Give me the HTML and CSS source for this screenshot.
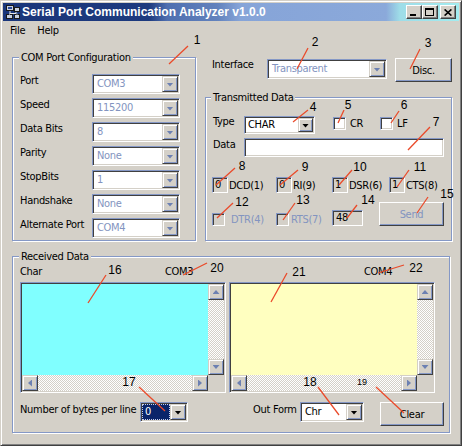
FILE: index.html
```html
<!DOCTYPE html>
<html>
<head>
<meta charset="utf-8">
<title>Serial Port Communication Analyzer v1.0.0</title>
<link rel="stylesheet" href="styles.css">
</head>
<body>
<div class="window">
  <div class="titlebar">
    <svg class="appicon" viewBox="0 0 16 16">
      <rect x="1.5" y="1.5" width="7" height="5" fill="#c8d0e0" stroke="#1a1a1a"/>
      <rect x="3" y="3" width="4" height="2" fill="#2a4a9a"/>
      <path d="M5 7v2.5h6V8" stroke="#e8e8e8" fill="none"/>
      <rect x="9.5" y="3.5" width="5" height="4" fill="#c8d0e0" stroke="#1a1a1a"/>
      <rect x="1.5" y="10.5" width="6" height="4" fill="#c8d0e0" stroke="#1a1a1a"/>
      <rect x="9.5" y="10.5" width="5" height="4" fill="#c8d0e0" stroke="#1a1a1a"/>
      <path d="M4.5 9.5v1M12 9.5v1" stroke="#e8e8e8"/>
    </svg>
    <span class="title">Serial Port Communication Analyzer v1.0.0</span>
    <div class="tbtns">
      <span class="tbtn"><i class="g-min"></i></span>
      <span class="tbtn"><i class="g-max"></i></span>
      <span class="tbtn tclose"><svg class="g-x" viewBox="0 0 8 7"><path d="M0.6 0.4l6.8 6.2M7.4 0.4L0.6 6.6" stroke="#000" stroke-width="1.6"/></svg></span>
    </div>
  </div>
  <div class="menubar"><span>File</span><span>Help</span></div>

  <div class="client">
    <div class="top">
      <div class="group cfg">
        <div class="gtitle">COM Port Configuration</div>
        <div class="cfg-rows">
          <div class="row"><span class="lbl">Port</span><div class="combo dis w88"><span class="ctext">COM3</span><span class="cbtn"><i class="ar-down"></i></span></div></div>
          <div class="row"><span class="lbl">Speed</span><div class="combo dis w88"><span class="ctext">115200</span><span class="cbtn"><i class="ar-down"></i></span></div></div>
          <div class="row"><span class="lbl">Data Bits</span><div class="combo dis w88"><span class="ctext">8</span><span class="cbtn"><i class="ar-down"></i></span></div></div>
          <div class="row"><span class="lbl">Parity</span><div class="combo dis w88"><span class="ctext">None</span><span class="cbtn"><i class="ar-down"></i></span></div></div>
          <div class="row"><span class="lbl">StopBits</span><div class="combo dis w88"><span class="ctext">1</span><span class="cbtn"><i class="ar-down"></i></span></div></div>
          <div class="row"><span class="lbl">Handshake</span><div class="combo dis w88"><span class="ctext">None</span><span class="cbtn"><i class="ar-down"></i></span></div></div>
          <div class="row"><span class="lbl">Alternate Port</span><div class="combo dis w88"><span class="ctext">COM4</span><span class="cbtn"><i class="ar-down"></i></span></div></div>
        </div>
      </div>

      <div class="rightcol">
        <div class="iface">
          <span class="lbl-if">Interface</span>
          <div class="combo dis w120"><span class="ctext">Transparent</span><span class="cbtn"><i class="ar-down"></i></span></div>
          <span class="btn disc">Disc.</span>
        </div>
        <div class="group tx">
          <div class="gtitle tx-title">Transmitted Data</div>
          <div class="tx-row type-row">
            <span class="lbl-tx">Type</span>
            <div class="combo sm w71"><span class="ctext">CHAR</span><span class="cbtn"><i class="ar-down"></i></span></div>
            <span class="chkwrap cr"><span class="chk"></span><span class="chk-l">CR</span></span>
            <span class="chkwrap"><span class="chk"></span><span class="chk-l">LF</span></span>
          </div>
          <div class="tx-row data-row">
            <span class="lbl-tx lbl-data">Data</span>
            <span class="textbox"></span>
          </div>
          <div class="tx-row status-row">
            <span class="stat s64"><span class="sbox">0</span>DCD(1)</span>
            <span class="stat s56"><span class="sbox">0</span>RI(9)</span>
            <span class="stat s57"><span class="sbox">1</span>DSR(6)</span>
            <span class="stat"><span class="sbox">1</span>CTS(8)</span>
          </div>
          <div class="tx-row ctl-row">
            <span class="chkwrap dtr"><span class="chk off"></span><span class="chk-l dis-t l6">DTR(4)</span></span>
            <span class="chkwrap rts"><span class="chk off"></span><span class="chk-l dis-t l2">RTS(7)</span></span>
            <span class="box48">48</span>
            <span class="btn send">Send</span>
          </div>
        </div>
      </div>
    </div>

    <div class="group rx">
      <div class="gtitle">Received Data</div>
      <div class="panes">
        <div class="pane">
          <div class="plabels"><span class="plead">Char</span><span>COM3</span></div>
          <div class="memo">
            <div class="mcontent cyan"></div>
            <div class="vs"><span class="sbtn"><i class="ar-up"></i></span><span class="track"></span><span class="sbtn"><i class="ar-down"></i></span></div>
            <div class="hs"><span class="sbtn"><i class="ar-left"></i></span><span class="track"></span><span class="sbtn"><i class="ar-right"></i></span></div>
            <div class="corner"></div>
          </div>
        </div>
        <div class="pane">
          <div class="plabels p2"><span>COM4</span></div>
          <div class="memo">
            <div class="mcontent yellow"></div>
            <div class="vs"><span class="sbtn"><i class="ar-up"></i></span><span class="track"></span><span class="sbtn"><i class="ar-down"></i></span></div>
            <div class="hs"><span class="sbtn"><i class="ar-left"></i></span><span class="track"></span><span class="sbtn"><i class="ar-right"></i></span></div>
            <div class="corner"></div>
          </div>
        </div>
      </div>
      <div class="rx-bottom">
        <span class="nb-lbl">Number of bytes per line</span>
        <div class="combo w48"><span class="ctext sel">0</span><span class="cbtn"><i class="ar-down blk"></i></span></div>
        <span class="of-lbl">Out Form</span>
        <div class="combo w64"><span class="ctext">Chr</span><span class="cbtn"><i class="ar-down blk"></i></span></div>
        <span class="btn clear">Clear</span>
      </div>
    </div>
  </div>

  <svg class="annot" viewBox="0 0 462 446">
    <g class="lines">
      <line x1="188" y1="46" x2="169" y2="64"/>
      <line x1="308" y1="48" x2="297" y2="69"/>
      <line x1="420" y1="49" x2="410" y2="69"/>
      <line x1="308" y1="110" x2="293" y2="122"/>
      <line x1="344" y1="110" x2="338" y2="123"/>
      <line x1="399" y1="111" x2="391" y2="123"/>
      <line x1="430" y1="127" x2="408" y2="150"/>
      <line x1="235" y1="168" x2="216" y2="185"/>
      <line x1="298" y1="170" x2="280" y2="185"/>
      <line x1="352" y1="170" x2="339" y2="185"/>
      <line x1="409" y1="170" x2="397" y2="187"/>
      <line x1="233" y1="203" x2="217" y2="218"/>
      <line x1="295" y1="203" x2="283" y2="220"/>
      <line x1="357" y1="205" x2="347" y2="218"/>
      <line x1="428" y1="197" x2="417" y2="213"/>
      <line x1="106" y1="275" x2="88" y2="303"/>
      <line x1="207" y1="263" x2="183" y2="275"/>
      <line x1="287" y1="273" x2="271" y2="302"/>
      <line x1="404" y1="265" x2="378" y2="273"/>
      <line x1="139" y1="387" x2="165" y2="411"/>
      <line x1="318" y1="387" x2="339" y2="415"/>
      <line x1="376" y1="387" x2="404" y2="413"/>
    </g>
    <g class="nums">
      <text x="197" y="40">1</text>
      <text x="315" y="42">2</text>
      <text x="428" y="43">3</text>
      <text x="313" y="107">4</text>
      <text x="348" y="105">5</text>
      <text x="404" y="105">6</text>
      <text x="436" y="122">7</text>
      <text x="242" y="166">8</text>
      <text x="305" y="167">9</text>
      <text x="360" y="167">10</text>
      <text x="420" y="167">11</text>
      <text x="242" y="202">12</text>
      <text x="303" y="200">13</text>
      <text x="368" y="200">14</text>
      <text x="447" y="194">15</text>
      <text x="115" y="270">16</text>
      <text x="217" y="268">20</text>
      <text x="299" y="272">21</text>
      <text x="416" y="268">22</text>
      <text x="129" y="382">17</text>
      <text x="310" y="382">18</text>
      <text class="small" x="362" y="382">19</text>
    </g>
  </svg>
</div>
</body>
</html>
```

FILE: styles.css
```css
* { box-sizing: border-box; }

body {
  margin: 0;
  background: #d4d0c8;
}

.window {
  position: relative;
  width: 462px;
  height: 446px;
  background: #d4d0c8;
  border: 1px solid;
  border-color: #d4d0c8 #404040 #404040 #d4d0c8;
  box-shadow: inset 1px 1px #fff, inset -1px -1px #808080;
  padding: 2px;
  font-family: "DejaVu Sans Condensed", "Liberation Sans", Arial, sans-serif;
  font-size: 11px;
  letter-spacing: -0.3px;
  color: #000;
  overflow: hidden;
}

/* ---------- title bar ---------- */
.titlebar {
  height: 18px;
  display: flex;
  align-items: center;
  color: #fff;
  background: linear-gradient(to right,
    #1a367a 0%, #1d3a7e 32%, #4f6fb0 36%, #6282bd 47%,
    #86a4d8 52%, #8ba9da 84%, #9edde8 87%, #a2ecf0 100%);
}
.appicon { width: 16px; height: 16px; margin-left: 2px; flex: none; }
.title {
  margin-left: 1px;
  font-family: "Liberation Sans", Arial, sans-serif;
  font-weight: bold;
  font-size: 12px;
  letter-spacing: 0;
  white-space: nowrap;
}
.tbtns { margin-left: auto; margin-right: 3px; display: flex; }
.tbtn {
  position: relative;
  width: 16px;
  height: 14px;
  background: #d4d0c8;
  border: 1px solid;
  border-color: #fff #404040 #404040 #fff;
  box-shadow: inset -1px -1px #808080;
  display: flex;
  align-items: center;
  justify-content: center;
}
.tclose { margin-left: 2px; }
.g-min { width: 6px; height: 2px; background: #000; margin: 6px 3px 0 0; }
.g-max {
  width: 9px; height: 8px;
  border: 1px solid #000; border-top-width: 2px;
  margin-right: 1px;
}
.g-x { width: 8px; height: 7px; margin-right: 1px; }

/* ---------- menu ---------- */
.menubar {
  height: 20px;
  display: flex;
  padding-left: 1px;
  line-height: 20px;
}
.menubar span { padding: 0 6px; }

/* ---------- groups ---------- */
.client { padding-left: 9px; }
.top { display: flex; gap: 9px; margin-top: 16px; }

.group {
  border: 1px solid #8598c6;
  box-shadow: inset 1px 1px #fff, 1px 1px #fff;
}
.gtitle {
  height: 13px;
  line-height: 13px;
  margin-top: -7px;
  margin-left: 6px;
  padding: 0 2px;
  background: #d4d0c8;
  width: max-content;
  white-space: nowrap;
}
.tx-title { margin-left: 5px; }

.cfg { width: 184px; height: 184px; }
.cfg-rows {
  margin-top: 10px;
  padding-left: 7px;
  display: flex;
  flex-direction: column;
  gap: 4px;
}
.row { display: flex; align-items: flex-start; height: 20px; }
.lbl { width: 72px; line-height: 14px; white-space: nowrap; }

/* ---------- combos ---------- */
.combo {
  display: flex;
  height: 20px;
  border: 1px solid;
  border-color: #8598c6 #fff #fff #8598c6;
  box-shadow: inset 1px 1px #404040, inset -1px -1px #d4d0c8;
  padding: 1px;
  background: #fff;
  flex: none;
}
.combo.sm { height: 18px; }
.w88 { width: 88px; }
.w120 { width: 120px; }
.w71 { width: 71px; }
.w48 { width: 48px; }
.w64 { width: 64px; }
.ctext {
  flex: 1;
  padding-left: 3px;
  line-height: 16px;
  white-space: nowrap;
  overflow: hidden;
}
.sm .ctext { line-height: 14px; padding-left: 2px; }
.dis .ctext { color: #8394c0; }
.ctext.sel {
  background: #0a246a;
  color: #fff;
  border: 1px dotted #c8d0e8;
  padding-left: 2px;
  line-height: 14px;
}
.cbtn, .sbtn {
  width: 16px;
  flex: none;
  background: #d4d0c8;
  border: 1px solid;
  border-color: #d4d0c8 #404040 #404040 #d4d0c8;
  box-shadow: inset 1px 1px #fff, inset -1px -1px #8598c6;
  display: flex;
  align-items: center;
  justify-content: center;
}
.sm .cbtn { width: 15px; }

.ar-down, .ar-up, .ar-left, .ar-right {
  display: block;
  background: #6c80b2;
}
.ar-down { width: 7px; height: 4px; clip-path: polygon(0 0, 100% 0, 50% 100%); }
.ar-up { width: 7px; height: 4px; clip-path: polygon(50% 0, 100% 100%, 0 100%); }
.ar-left { width: 4px; height: 7px; clip-path: polygon(100% 0, 100% 100%, 0 50%); }
.ar-right { width: 4px; height: 7px; clip-path: polygon(0 0, 100% 50%, 0 100%); }
.cbtn .ar-down { margin-top: 1px; }
.sm .cbtn .ar-down, .ar-down.blk { background: #000; }

/* ---------- buttons ---------- */
.btn {
  display: flex;
  align-items: center;
  justify-content: center;
  background: #d4d0c8;
  border: 1px solid;
  border-color: #fff #404040 #404040 #fff;
  box-shadow: inset -1px -1px #8598c6;
  flex: none;
  height: 24px;
}
.disc { width: 57px; margin-left: 8px; }
.send { width: 65px; margin-left: 16px; color: #8394c0; }
.clear { width: 64px; margin-left: 16px; }

/* ---------- right column ---------- */
.rightcol { width: 247px; }
.iface {
  margin-top: 1px;
  height: 24px;
  display: flex;
  align-items: flex-start;
  padding-left: 7px;
}
.lbl-if { width: 56px; line-height: 14px; }
.iface .combo { margin-top: 1px; }

.tx { margin-top: 15px; width: 247px; height: 144px; }
.tx-row { display: flex; align-items: flex-start; }
.type-row { margin-top: 12px; padding-left: 7px; height: 18px; }
.lbl-tx { width: 31px; line-height: 12px; }
.lbl-data { line-height: 14px; }
.chkwrap { display: flex; align-items: center; margin-top: 1px; }
.cr { margin-left: 18px; width: 47px; }
.chk {
  width: 13px;
  height: 13px;
  flex: none;
  background: #fff;
  border: 1px solid;
  border-color: #8598c6 #fff #fff #8598c6;
  box-shadow: inset 1px 1px #404040, inset -1px -1px #d4d0c8;
}
.chk.off { background: #d4d0c8; }
.chk-l { margin-left: 4px; line-height: 13px; }
.dis-t { color: #8394c0; }
.l6 { margin-left: 6px; }
.l2 { margin-left: 2px; }

.data-row { margin-top: 4px; padding-left: 7px; }
.textbox {
  width: 200px;
  height: 19px;
  background: #fff;
  border: 1px solid;
  border-color: #8598c6 #fff #fff #8598c6;
  box-shadow: inset 1px 1px #404040, inset -1px -1px #d4d0c8;
}

.status-row { margin-top: 20px; padding-left: 6px; height: 16px; align-items: center; }
.stat { display: flex; align-items: center; white-space: nowrap; }
.s64 { width: 64px; }
.s56 { width: 56px; }
.s57 { width: 57px; }
.sbox {
  width: 16px;
  height: 16px;
  margin-right: 1px;
  padding-left: 2px;
  line-height: 14px;
  border-top: 1px solid #8598c6;
  border-left: 1px solid #8598c6;
  border-bottom: 1px solid #fff;
  border-right: 1px solid #fff;
  box-shadow: inset 1px 1px #404040;
}

.ctl-row { margin-top: 9px; padding-left: 6px; height: 24px; }
.dtr { width: 64px; margin-top: 11px; }
.rts { width: 56px; margin-top: 11px; }
.box48 {
  width: 31px;
  height: 16px;
  margin-top: 8px;
  padding-left: 3px;
  line-height: 14px;
  border-top: 1px solid #8598c6;
  border-left: 1px solid #8598c6;
  border-bottom: 1px solid #fff;
  border-right: 1px solid #fff;
  box-shadow: inset 1px 1px #404040;
}

/* ---------- received ---------- */
.rx { margin-top: 15px; width: 438px; height: 177px; }
.panes { display: flex; gap: 3px; padding-left: 7px; margin-top: 2px; }
.pane { width: 206px; }
.plabels { display: flex; height: 14px; line-height: 14px; white-space: nowrap; }
.plead { width: 145px; flex: none; }
.p2 { padding-left: 135px; }
.memo {
  margin-top: 3px;
  width: 206px;
  height: 111px;
  border: 1px solid;
  border-color: #8598c6 #fff #fff #8598c6;
  box-shadow: inset 1px 1px #404040, inset -1px -1px #d4d0c8;
  padding: 1px;
  display: grid;
  grid-template-columns: 1fr 16px;
  grid-template-rows: 1fr 16px;
}
.cyan { background: #80ffff; }
.yellow { background: #ffffc0; }
.vs { display: flex; flex-direction: column; }
.hs { display: flex; }
.vs .sbtn { height: 16px; }
.hs .sbtn { height: 16px; }
.track {
  flex: 1;
  background: repeating-conic-gradient(#d4d0c8 0 25%, #fff 0 50%) 0 0 / 2px 2px;
}
.corner { background: #d4d0c8; }

.rx-bottom {
  display: flex;
  align-items: flex-start;
  margin-top: 9px;
  padding-left: 7px;
  height: 24px;
}
.nb-lbl { width: 120px; line-height: 14px; margin-top: 1px; white-space: nowrap; }
.of-lbl { width: 47px; margin-left: 65px; line-height: 14px; margin-top: 1px; white-space: nowrap; }

/* ---------- annotations ---------- */
.annot {
  position: absolute;
  left: -1px;
  top: -1px;
  width: 462px;
  height: 446px;
  pointer-events: none;
}
.lines line { stroke: #ea4a2a; stroke-width: 1.3; }
.nums text {
  font-family: "Liberation Sans", Arial, sans-serif;
  font-size: 12px;
  letter-spacing: 0;
  fill: #000;
  text-anchor: middle;
  dominant-baseline: central;
}
.nums text.small { font-size: 9px; }
```
